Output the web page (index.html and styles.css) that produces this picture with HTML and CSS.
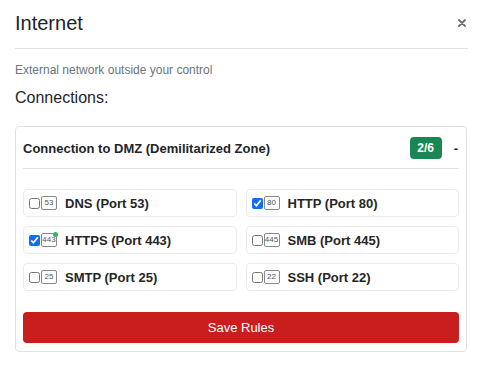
FILE: index.html
```html
<!DOCTYPE html>
<html>
<head>
    <title>Internet</title>
    <link rel="stylesheet" href="styles.css">
</head>
<body>
    <div class="modal">
        <div class="modal-header">
            <h2 class="modal-title">Internet</h2>
            <button class="close" aria-label="Close">
                <svg width="8" height="8" viewBox="0 0 8 8"><path d="M1 1L7 7M7 1L1 7" stroke="#707070" stroke-width="1.8" stroke-linecap="round"/></svg>
            </button>
        </div>
        <p class="description">External network outside your control</p>
        <h3 class="section-title">Connections:</h3>

        <div class="card">
            <div class="card-header">
                <span class="card-title">Connection to DMZ (Demilitarized Zone)</span>
                <span class="badge">2/6</span>
                <span class="toggle">-</span>
            </div>
            <div class="rules">
                <label class="rule">
                    <input type="checkbox">
                    <span class="port">53</span>
                    <span class="rule-name">DNS (Port 53)</span>
                </label>
                <label class="rule">
                    <input type="checkbox" checked>
                    <span class="port">80</span>
                    <span class="rule-name">HTTP (Port 80)</span>
                </label>
                <label class="rule">
                    <input type="checkbox" checked>
                    <span class="port secure">443</span>
                    <span class="rule-name">HTTPS (Port 443)</span>
                </label>
                <label class="rule">
                    <input type="checkbox">
                    <span class="port">445</span>
                    <span class="rule-name">SMB (Port 445)</span>
                </label>
                <label class="rule">
                    <input type="checkbox">
                    <span class="port">25</span>
                    <span class="rule-name">SMTP (Port 25)</span>
                </label>
                <label class="rule">
                    <input type="checkbox">
                    <span class="port">22</span>
                    <span class="rule-name">SSH (Port 22)</span>
                </label>
            </div>
            <button class="save">Save Rules</button>
        </div>
    </div>
</body>
</html>
```

FILE: styles.css
```css
body {
    margin: 0;
    padding: 0;
    font-family: "Liberation Sans", Arial, sans-serif;
    color: #212529;
    background: #fff;
}

.modal {
    padding: 0 10px 0 15px;
}

.modal-header {
    display: flex;
    align-items: center;
    justify-content: space-between;
    padding: 11px 0 13px;
    border-bottom: 1px solid #dee2e6;
}

.modal-title {
    margin: 0;
    font-size: 20px;
    font-weight: normal;
    line-height: 24px;
}

.close {
    border: none;
    background: none;
    padding: 0;
    margin-right: 2px;
    width: 8px;
    height: 8px;
    display: flex;
    cursor: pointer;
}

.description {
    margin: 14px 0 0;
    font-size: 12px;
    line-height: 15px;
    color: #6c757d;
}

.section-title {
    margin: 10px 0 0;
    font-size: 16px;
    font-weight: normal;
    line-height: 19px;
}

.card {
    margin-top: 19px;
    margin-right: 1px;
    border: 1px solid #dee2e6;
    border-radius: 4px;
    padding: 0 7px 8px;
}

.card-header {
    display: flex;
    align-items: center;
    padding: 10px 0 9px;
    border-bottom: 1px solid #dee2e6;
}

.card-title {
    flex: 1;
    font-size: 13px;
    font-weight: bold;
}

.badge {
    background-color: #198754;
    color: #fff;
    font-size: 12px;
    font-weight: bold;
    width: 32px;
    height: 22px;
    line-height: 22px;
    text-align: center;
    border-radius: 4px;
}

.toggle {
    font-size: 13px;
    font-weight: bold;
    margin-left: 12px;
    margin-right: 1px;
}

.rules {
    display: grid;
    grid-template-columns: 1fr 1fr;
    gap: 9px;
    margin-top: 20px;
}

.rule {
    display: flex;
    align-items: center;
    height: 26px;
    border: 1px solid #e9ecef;
    border-radius: 4px;
    padding: 0 5px;
    cursor: pointer;
}

.rule input {
    width: 11px;
    height: 11px;
    margin: 0 1px 0 0;
    accent-color: #0d6efd;
}

.port {
    position: relative;
    width: 14px;
    height: 12px;
    border: 1px solid #8a8a8a;
    border-radius: 2px;
    font-size: 8px;
    line-height: 12px;
    text-align: center;
    color: #555;
}

.port.secure::after {
    content: "";
    position: absolute;
    top: -2px;
    right: -2px;
    width: 5px;
    height: 5px;
    border-radius: 50%;
    background-color: #2eb85c;
}

.rule-name {
    margin-left: 8px;
    font-size: 13px;
    font-weight: bold;
    color: #262626;
}

.save {
    display: block;
    width: 100%;
    height: 31px;
    margin-top: 21px;
    border: none;
    border-radius: 4px;
    background-color: #c81e1e;
    color: #fff;
    font-family: inherit;
    font-size: 13px;
    cursor: pointer;
}
```
